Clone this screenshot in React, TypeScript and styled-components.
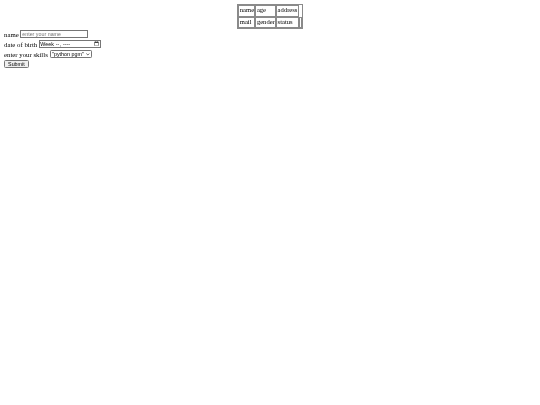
import styled, { createGlobalStyle } from 'styled-components';

const GlobalStyle = createGlobalStyle`
  html {
    zoom: 0.4;
  }
  body {
    margin: 10px;
    font-family: "Liberation Serif", "Times New Roman", serif;
    font-size: 17px;
    color: #000;
    background: #fff;
    will-change: transform;
  }
`;

const InfoTable = styled.table`
  margin: 0 auto;
  border: 1px solid #8a8a8a;
  border-spacing: 2px;
  font-size: 16.5px;
`;

const Cell = styled.td`
  border: 1px solid #8a8a8a;
  padding: 1px;
  line-height: 22px;
`;

const Form = styled.form`
  margin: 0;
`;

const Line = styled.div`
  display: flex;
  align-items: center;
  height: 25px;
  white-space: pre;
`;

const Control = styled.input<{ w: number }>`
  box-sizing: border-box;
  width: ${p => p.w}px;
  height: 21px;
  font-family: "Liberation Sans", Arial, sans-serif;
  font-size: 13.333px;
  color: #000;
`;

const SelectWrap = styled.span`
  position: relative;
  display: inline-flex;
  align-items: center;
`;

const SkillSelect = styled.select`
  appearance: none;
  box-sizing: border-box;
  width: 106px;
  height: 19px;
  padding: 0 16px 0 4px;
  border: 1px solid #767676;
  border-radius: 3px;
  background: #fff;
  color: #000;
  font-family: "Liberation Sans", Arial, sans-serif;
  font-size: 13.333px;
`;

const Chevron = styled.svg`
  position: absolute;
  right: 5px;
  top: 6px;
  width: 9px;
  height: 7px;
  pointer-events: none;
`;

const SubmitButton = styled.button`
  box-sizing: border-box;
  width: 62px;
  height: 21px;
  font-family: "Liberation Sans", Arial, sans-serif;
  font-size: 13.333px;
`;

const App = () => {
  return (
    <>
      <GlobalStyle />
      <InfoTable>
        <tbody>
          <tr>
            <Cell>name</Cell>
            <Cell>age</Cell>
            <Cell>address</Cell>
          </tr>
          <tr>
            <Cell>mail</Cell>
            <Cell>gender</Cell>
            <Cell>status</Cell>
            <Cell></Cell>
          </tr>
        </tbody>
      </InfoTable>
      <Form onSubmit={e => e.preventDefault()}>
        <Line>
          {'name '}
          <Control w={168} type="text" placeholder="enter your name" />
        </Line>
        <Line>
          {'date of birth '}
          <Control w={155} type="week" />
        </Line>
        <Line>
          {'enter your skills '}
          <SelectWrap>
            <SkillSelect defaultValue="python">
              <option value="python">"python pgm"</option>
              <option value="java">"java pgm"</option>
            </SkillSelect>
            <Chevron viewBox="0 0 9 7">
              <path d="M1 1.5 L4.5 5 L8 1.5" fill="none" stroke="#000" strokeWidth="1.6" />
            </Chevron>
          </SelectWrap>
        </Line>
        <Line>
          <SubmitButton type="submit">Submit</SubmitButton>
        </Line>
      </Form>
    </>
  );
};

export default App;
